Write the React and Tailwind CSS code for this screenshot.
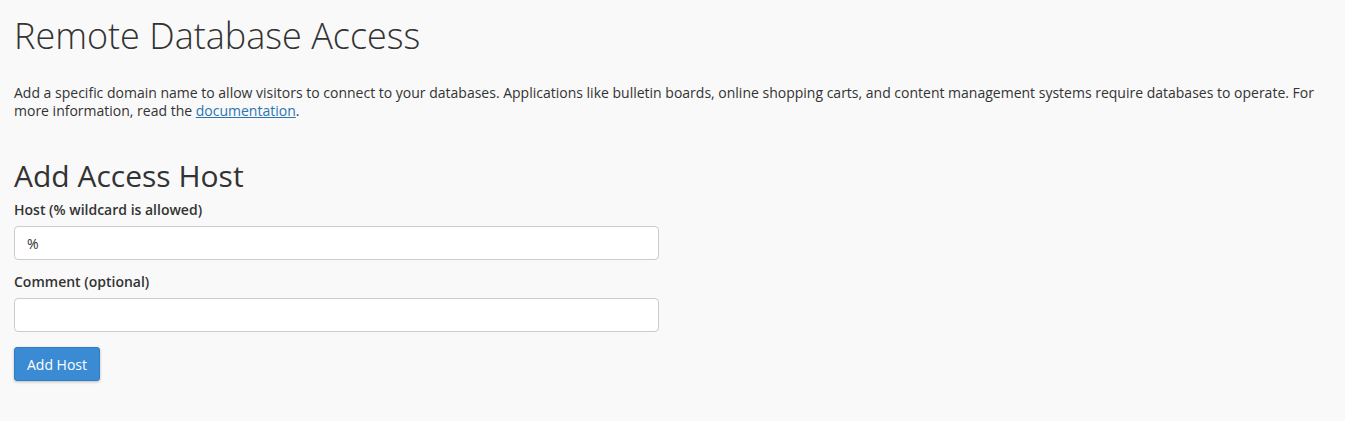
export default function App() {
  return (
    <div className="min-h-screen bg-[#f9f9f9] text-[#333] font-['Open_Sans',sans-serif] px-[14px] pt-[12px]">
      <h1 className="text-[36px] font-light leading-[48px]">Remote Database Access</h1>
      <p className="mt-[24px] text-[14px] leading-[18px]">
        Add a specific domain name to allow visitors to connect to your databases. Applications like bulletin boards, online shopping carts, and content management systems require databases to operate. For more information, read the{' '}
        <a href="#" className="text-[#2a75b5] underline">documentation</a>.
      </p>
      <h2 className="mt-[38px] text-[30px] font-medium leading-[36px]">Add Access Host</h2>
      <form className="w-[645px]" onSubmit={(e) => e.preventDefault()}>
        <div className="mt-[6px]">
          <label className="block text-[14px] font-semibold leading-[20px] mb-[6px]">Host (% wildcard is allowed)</label>
          <input
            defaultValue="%"
            className="block w-full h-[34px] px-[12px] text-[14px] bg-white border border-[#ccc] rounded-[4px] outline-none"
          />
        </div>
        <div className="mt-[12px]">
          <label className="block text-[14px] font-semibold leading-[20px] mb-[6px]">Comment (optional)</label>
          <input className="block w-full h-[34px] px-[12px] text-[14px] bg-white border border-[#ccc] rounded-[4px] outline-none" />
        </div>
        <button
          type="submit"
          className="mt-[15px] h-[34px] px-[12px] text-[14px] text-white bg-[#3b8bd4] border border-[#2f7cc2] rounded-[3px] shadow-[0_1px_3px_rgba(0,0,0,0.25)]"
        >
          Add Host
        </button>
      </form>
    </div>
  );
}
